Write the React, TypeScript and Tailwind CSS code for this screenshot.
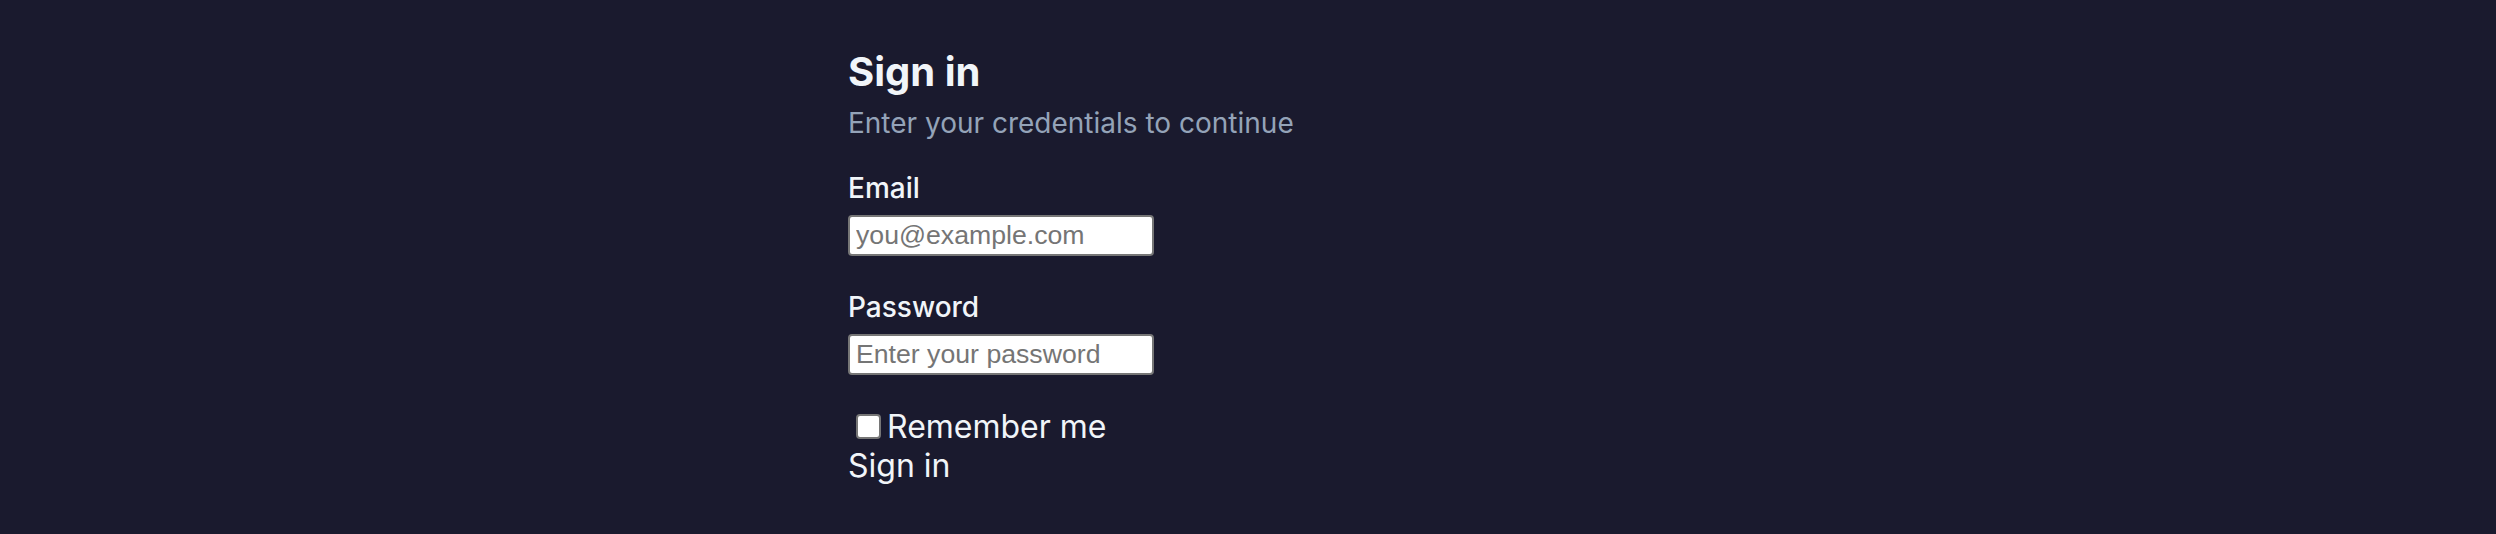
export default function App() {
    return (
        <div className="min-h-[534px] w-full bg-[#1a1a2e] font-['Inter','Liberation_Sans',sans-serif] text-[#f1f5f9]">
            <form
                className="mx-auto flex w-[800px] flex-col items-start pt-[42px]"
                onSubmit={(e) => e.preventDefault()}
            >
                <h1 className="text-[40px] leading-[60px] font-bold">Sign in</h1>
                <p className="text-[28px] leading-[42px] text-[#94a3b8]">Enter your credentials to continue</p>

                <label htmlFor="email" className="mt-[23px] block text-[28px] leading-[42px] font-medium">
                    Email
                </label>
                <input
                    id="email"
                    type="email"
                    placeholder="you@example.com"
                    className="mt-[6px] h-[41px] w-[306px] rounded-[4px] border-2 border-[#767676] bg-white px-[6px] font-['Liberation_Sans',Arial,sans-serif] text-[26.67px] text-black placeholder:text-[#757575]"
                />

                <label htmlFor="password" className="mt-[30px] block text-[28px] leading-[42px] font-medium">
                    Password
                </label>
                <input
                    id="password"
                    type="password"
                    placeholder="Enter your password"
                    className="mt-[6px] h-[41px] w-[306px] rounded-[4px] border-2 border-[#767676] bg-white px-[6px] font-['Liberation_Sans',Arial,sans-serif] text-[26.67px] text-black placeholder:text-[#757575]"
                />

                <label className="mt-[32px] flex items-start text-[32px] leading-[39px]">
                    <input
                        type="checkbox"
                        className="ml-[8px] mt-[7px] h-[25px] w-[25px] shrink-0 appearance-none rounded-[4px] border-2 border-[#767676] bg-white"
                    />
                    <span className="ml-[6px]">Remember me</span>
                </label>
                <button type="submit" className="text-[32px] leading-[39px]">
                    Sign in
                </button>
            </form>
        </div>
    );
}
